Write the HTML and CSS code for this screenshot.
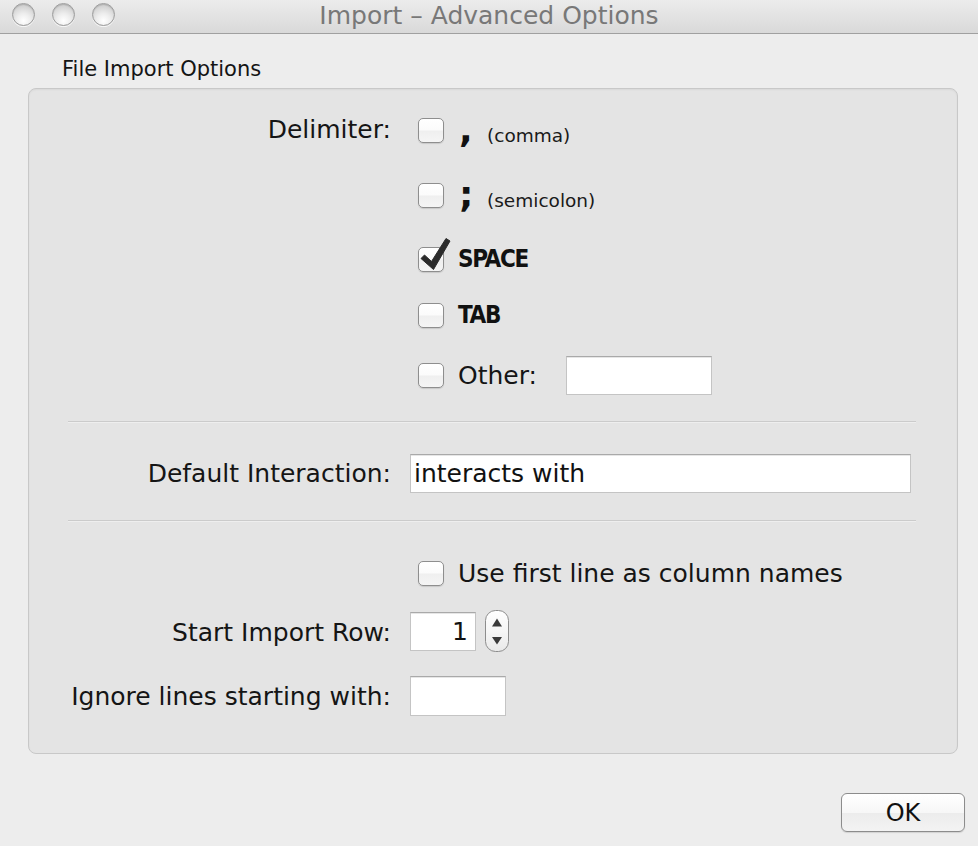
FILE: index.html
```html
<!DOCTYPE html>
<html>
<head>
<meta charset="utf-8">
<title>Import – Advanced Options</title>
<link rel="stylesheet" href="styles.css">
</head>
<body>
<div class="window">
  <div class="titlebar">
    <div class="lights">
      <span class="light"></span><span class="light"></span><span class="light"></span>
    </div>
    <div class="title">Import – Advanced Options</div>
    <div></div>
  </div>

  <div class="group-title">File Import Options</div>

  <div class="panel">
    <div class="row row-delim">
      <div class="label label-top">Delimiter:</div>
      <div class="options">
        <div class="opt opt-comma">
          <span class="cb"></span>
          <span class="desc"><span class="punct">,</span><span class="small">(comma)</span></span>
        </div>
        <div class="opt opt-semi">
          <span class="cb"></span>
          <span class="desc"><span class="punct">;</span><span class="small">(semicolon)</span></span>
        </div>
        <div class="opt opt-space">
          <span class="cb"><svg class="check" width="34" height="36" viewBox="0 0 34 36"><path d="M2 21.5 L5.5 18 L12.5 24.5 L27 1.5 L31 4 L14.5 32.5 Z" fill="#2b2b2b" stroke="#2b2b2b" stroke-width="1" stroke-linejoin="round"/></svg></span>
          <span class="bold-text">SPACE</span>
        </div>
        <div class="opt opt-tab">
          <span class="cb"></span>
          <span class="bold-text">TAB</span>
        </div>
        <div class="opt">
          <span class="cb"></span>
          <span class="opt-text">Other:</span>
          <input class="field field-other" type="text" value="">
        </div>
      </div>
    </div>

    <div class="sep sep-1"></div>

    <div class="row row-interaction">
      <div class="label">Default Interaction:</div>
      <input class="field field-wide" type="text" value="interacts with">
    </div>

    <div class="sep sep-2"></div>

    <div class="row row-first">
      <div class="label"></div>
      <div class="opt">
        <span class="cb"></span>
        <span class="opt-text">Use first line as column names</span>
      </div>
    </div>

    <div class="row row-start">
      <div class="label">Start Import Row:</div>
      <input class="field field-num" type="text" value="1">
      <span class="spinner">
        <svg width="24" height="42" viewBox="0 0 24 42">
          <defs>
            <linearGradient id="sg" x1="0" y1="0" x2="0" y2="1">
              <stop offset="0" stop-color="#ffffff"/>
              <stop offset="0.5" stop-color="#f6f6f6"/>
              <stop offset="1" stop-color="#e9e9e9"/>
            </linearGradient>
          </defs>
          <rect x="0.5" y="0.5" width="23" height="41" rx="10" ry="10" fill="url(#sg)" stroke="#8d8d8d"/>
          <path d="M7 16.5 L12 8.5 L17 16.5 Z" fill="#3a3a3a"/>
          <path d="M7 27 L17 27 L12 34.5 Z" fill="#3a3a3a"/>
        </svg>
      </span>
    </div>

    <div class="row row-ignore">
      <div class="label">Ignore lines starting with:</div>
      <input class="field field-ignore" type="text" value="">
    </div>
  </div>

  <div class="footer">
    <button class="ok">OK</button>
  </div>
</div>
</body>
</html>
```

FILE: styles.css
```css
* { box-sizing: border-box; }

html, body {
  margin: 0;
  padding: 0;
}

body {
  width: 978px;
  height: 846px;
  overflow: hidden;
  background: #ededed;
  font-family: "DejaVu Sans", "Noto Sans", sans-serif;
  color: #151515;
}

.titlebar {
  height: 34px;
  border-bottom: 1px solid #a0a0a0;
  background: linear-gradient(#ececec, #d9d9d9);
  display: grid;
  grid-template-columns: 1fr auto 1fr;
}

.lights {
  display: flex;
  gap: 17px;
  padding-left: 12px;
  padding-top: 3px;
}

.light {
  width: 23px;
  height: 23px;
  border-radius: 50%;
  border: 1px solid #9d9d9d;
  background: radial-gradient(circle at 50% 80%, #ffffff 0%, #eeeeee 35%, #d2d2d2 75%, #c4c4c4 100%);
  box-shadow: inset 0 1px 1px rgba(0,0,0,0.15), 0 1px 0 rgba(255,255,255,0.7);
}

.title {
  font-size: 25px;
  line-height: 31px;
  color: #787878;
  white-space: nowrap;
}

.group-title {
  font-size: 21px;
  line-height: 24px;
  margin: 23px 0 7px 62px;
  color: #141414;
}

.panel {
  margin: 0 20px 0 28px;
  border: 1px solid #c8c8c8;
  border-radius: 8px;
  background: #e4e4e4;
  padding: 21px 0 37px;
  box-shadow: inset 0 1px 2px rgba(0,0,0,0.05);
}

.row {
  display: flex;
  align-items: center;
}

.label {
  width: 362px;
  flex: none;
  margin-right: 19px;
  text-align: right;
  font-size: 25px;
  white-space: nowrap;
}

.row-delim {
  align-items: flex-start;
}

.label-top {
  line-height: 40px;
}

.options {
  display: flex;
  flex-direction: column;
  gap: 20px;
}

.opt {
  height: 40px;
  display: flex;
  align-items: center;
  padding-left: 8px;
}

.opt-comma { margin-bottom: 5px; }
.opt-semi { margin-bottom: 4px; }
.opt-space { margin-bottom: -4px; }

.cb {
  position: relative;
  flex: none;
  width: 26px;
  height: 25px;
  border: 1px solid #8e8e8e;
  border-radius: 5px;
  background: linear-gradient(#ffffff 0%, #fbfbfb 48%, #efefef 52%, #f5f5f5 100%);
  box-shadow: 0 1px 1px rgba(0,0,0,0.12);
}

.check {
  position: absolute;
  left: 0px;
  top: -11px;
}

.desc {
  display: flex;
  align-items: baseline;
  margin-left: 15px;
  line-height: 1;
}

.punct {
  font-size: 36px;
  font-weight: bold;
  width: 28px;
  color: #111;
}

.small {
  font-size: 18.5px;
  color: #1a1a1a;
}

.bold-text {
  margin-left: 14px;
  font-family: "Liberation Sans Narrow", "DejaVu Sans Condensed", "DejaVu Sans", sans-serif;
  font-stretch: condensed;
  font-weight: bold;
  font-size: 24px;
  letter-spacing: -1.3px;
  color: #111;
}

.opt-text {
  margin-left: 14px;
  font-size: 25px;
  white-space: nowrap;
}

.field {
  display: block;
  height: 39px;
  margin: 0;
  background: #ffffff;
  border: 1px solid #c4c4c4;
  border-top-color: #a9a9a9;
  border-radius: 0;
  font-family: "DejaVu Sans", sans-serif;
  font-size: 25px;
  color: #111;
  padding: 0 3px;
  outline: none;
  box-shadow: inset 0 1px 0 #e6e6e6;
}

.field-other {
  width: 146px;
  margin-left: 29px;
}

.sep {
  height: 2px;
  border-top: 1px solid #cbcbcb;
  border-bottom: 1px solid #eeeeee;
  margin: 0 41px 0 39px;
}

.sep-1 { margin-top: 26px; }

.row-interaction { margin-top: 31px; }

.field-wide { width: 501px; }

.sep-2 { margin-top: 27px; }

.row-first { margin-top: 31px; }

.row-start { margin-top: 17px; height: 42px; }

.row-start .label { padding-top: 3px; }

.field-num {
  width: 66px;
  text-align: right;
  padding-right: 7px;
}

.spinner {
  display: block;
  width: 24px;
  height: 42px;
  margin-left: 9px;
}

.spinner svg { display: block; }

.row-ignore { margin-top: 24px; }

.field-ignore {
  width: 96px;
  height: 40px;
}

.footer {
  display: flex;
  justify-content: flex-end;
  padding-right: 13px;
  margin-top: 39px;
}

.ok {
  width: 124px;
  height: 39px;
  border: 1px solid #8c8c8c;
  border-radius: 6px;
  background: linear-gradient(#ffffff 0%, #f7f7f7 50%, #ececec 52%, #f3f3f3 100%);
  box-shadow: 0 1px 1px rgba(0,0,0,0.12);
  font-family: "DejaVu Sans", sans-serif;
  font-size: 24px;
  color: #111;
  padding: 0;
}
```
